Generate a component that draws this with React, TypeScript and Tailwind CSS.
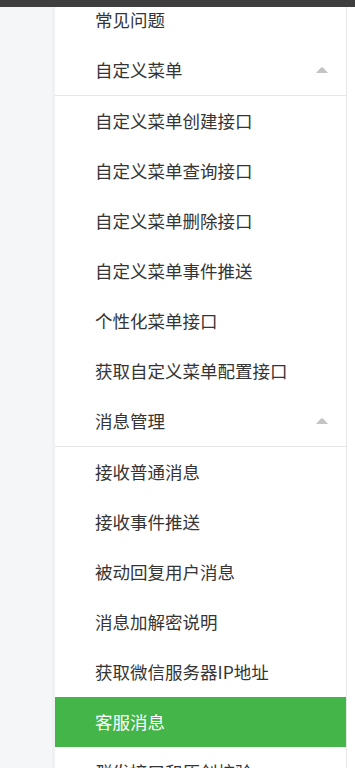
import React from "react";

type Row = { label: string; group?: boolean; active?: boolean };

const rows: Row[] = [
  { label: "常见问题" },
  { label: "自定义菜单", group: true },
  { label: "自定义菜单创建接口" },
  { label: "自定义菜单查询接口" },
  { label: "自定义菜单删除接口" },
  { label: "自定义菜单事件推送" },
  { label: "个性化菜单接口" },
  { label: "获取自定义菜单配置接口" },
  { label: "消息管理", group: true },
  { label: "接收普通消息" },
  { label: "接收事件推送" },
  { label: "被动回复用户消息" },
  { label: "消息加解密说明" },
  { label: "获取微信服务器IP地址" },
  { label: "客服消息", active: true },
  { label: "群发接口和原创校验" },
];

const Caret = () => (
  <svg width="14" height="8" viewBox="0 0 14 8" className="mr-[17px]">
    <path d="M1 7 L5.5 2 Q7 0.6 8.5 2 L13 7 Z" fill="#c4c4c4" />
  </svg>
);

const App = () => {
  return (
    <div
      className="relative h-[768px] w-[355px] overflow-hidden bg-white"
      style={{ fontFamily: '"Noto Sans CJK SC", "Noto Sans", sans-serif' }}
    >
      <div className="relative z-10 h-[7px] bg-[#3e3e3e]" />
      <div className="flex h-full">
        <div className="w-[52px] shrink-0 bg-[#f5f6f8]" />
        <div className="w-[3px] shrink-0 bg-[#f0f1f2]" />
        <div className="w-[292px] shrink-0 border-r border-[#e6e6e6]">
          <div className="-mt-[12px]">
            {rows.map((row, i) => (
              <div
                key={i}
                className={
                  row.active
                    ? "flex h-[50px] items-center bg-[#44b549] pl-[40px] text-[17.5px] text-white"
                    : row.group
                    ? "flex h-[51px] items-center justify-between border-b border-[#e7e7e7] pl-[40px] text-[17.5px] text-[#353535]"
                    : "flex h-[50px] items-center pl-[40px] text-[17.5px] text-[#353535]"
                }
              >
                <span>{row.label}</span>
                {row.group && <Caret />}
              </div>
            ))}
          </div>
        </div>
      </div>
    </div>
  );
};

export default App;
